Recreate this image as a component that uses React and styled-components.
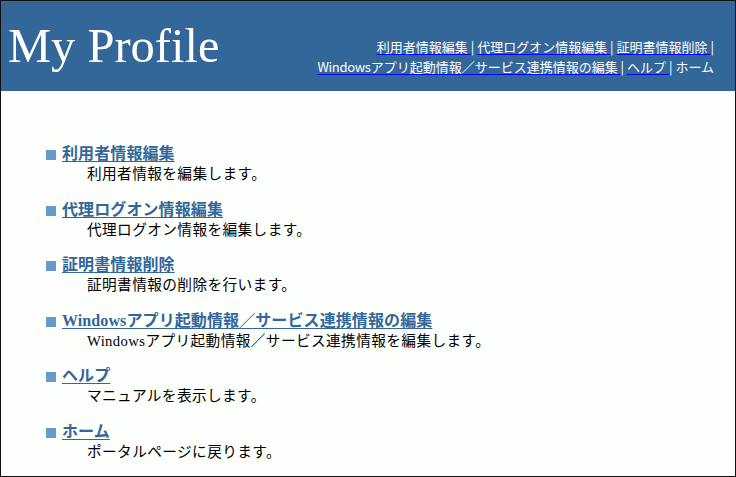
import styled, { createGlobalStyle } from 'styled-components';

const GlobalStyle = createGlobalStyle`
    html, body {
        margin: 0;
        padding: 0;
        background: #fcfffc;
    }
`;

const Frame = styled.div`
    box-sizing: border-box;
    width: 736px;
    height: 477px;
    border: 1px solid #111;
    background: #fcfffc;
    font-family: "Liberation Serif", "Noto Sans CJK JP", serif;
    color: #000;
    overflow: hidden;
    text-spacing-trim: space-all;
`;

const Header = styled.header`
    display: flex;
    justify-content: space-between;
    align-items: flex-end;
    height: 90px;
    box-sizing: border-box;
    padding: 0 21px 14px 7px;
    background: #336699;
`;

const Title = styled.h1`
    align-self: flex-start;
    margin: 18px 0 0;
    font-family: "Liberation Serif", serif;
    font-size: 48.5px;
    font-weight: normal;
    line-height: 53px;
    color: #fff;
`;

const Nav = styled.nav`
    text-align: right;
    font-family: "Noto Sans CJK JP", sans-serif;
    font-size: 13px;
    line-height: 20px;
    color: #fff;
    white-space: nowrap;
`;

const NavLink = styled.a`
    color: #fff;
    text-decoration: underline;
    text-decoration-color: #0000ff;
    text-underline-offset: 2px;
`;

const Latin = styled.span`
    letter-spacing: -0.3px;
`;

const Menu = styled.dl`
    margin: 53px 0 0 45px;
    padding: 0;
`;

const Term = styled.dt`
    font-size: 16px;
    line-height: 20px;
    font-weight: bold;
    letter-spacing: 0.1px;
`;

const Bullet = styled.span`
    display: inline-block;
    width: 10px;
    height: 10px;
    margin-right: 6px;
    background: #6699cc;
    vertical-align: -1px;
`;

const MenuLink = styled.a`
    color: #336699;
    text-decoration: underline;
    text-underline-offset: 2px;
`;

const Desc = styled.dd`
    margin: 0 0 15.5px 41px;
    font-size: 14.67px;
    line-height: 20px;
    letter-spacing: 0.4px;
`;

const navLines = [
    [
        { label: '利用者情報編集', link: true },
        { label: '代理ログオン情報編集', link: true },
        { label: '証明書情報削除', link: true, tail: true },
    ],
    [
        { label: 'アプリ起動情報／サービス連携情報の編集', latin: 'Windows', link: true },
        { label: 'ヘルプ', link: true },
        { label: 'ホーム', link: false },
    ],
];

const items = [
    { title: '利用者情報編集', desc: '利用者情報を編集します。' },
    { title: '代理ログオン情報編集', desc: '代理ログオン情報を編集します。' },
    { title: '証明書情報削除', desc: '証明書情報の削除を行います。' },
    {
        title: 'Windowsアプリ起動情報／サービス連携情報の編集',
        desc: 'Windowsアプリ起動情報／サービス連携情報を編集します。',
    },
    { title: 'ヘルプ', desc: 'マニュアルを表示します。' },
    { title: 'ホーム', desc: 'ポータルページに戻ります。' },
];

const NavLabel = ({ item }) => (
    <>
        {item.latin && <Latin>{item.latin}</Latin>}
        {item.label}
    </>
);

const App = () => (
    <>
        <GlobalStyle />
        <Frame>
            <Header>
                <Title>My Profile</Title>
                <Nav>
                    {navLines.map((line, i) => (
                        <div key={i}>
                            {line.map((n, j) => (
                                <span key={n.label}>
                                    {n.link ? (
                                        <NavLink href="#">
                                            <NavLabel item={n} />{' '}
                                        </NavLink>
                                    ) : (
                                        <NavLabel item={n} />
                                    )}
                                    {(j < line.length - 1 || n.tail) && '| '}
                                </span>
                            ))}
                        </div>
                    ))}
                </Nav>
            </Header>
            <Menu>
                {items.map((it) => (
                    <div key={it.title}>
                        <Term>
                            <Bullet />
                            <MenuLink href="#">{it.title}</MenuLink>
                        </Term>
                        <Desc>{it.desc}</Desc>
                    </div>
                ))}
            </Menu>
        </Frame>
    </>
);

export default App;
